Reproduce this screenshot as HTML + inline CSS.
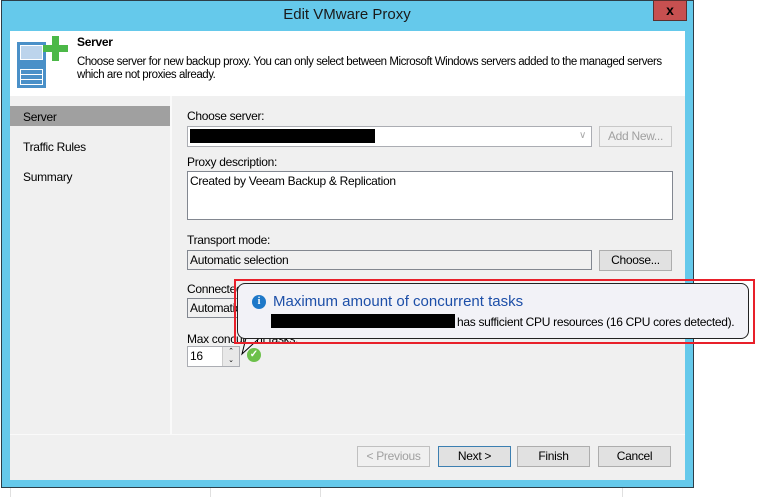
<!DOCTYPE html>
<html><head><meta charset="utf-8"><style>
*{margin:0;padding:0;box-sizing:border-box}
body{width:758px;height:497px;background:#fff;position:relative;overflow:hidden;font-family:"Liberation Sans",sans-serif;font-size:12px;color:#000}
.a{position:absolute}
.t{position:absolute;white-space:nowrap;font-size:12px;letter-spacing:-0.3px}
.btn{position:absolute;background:#e1e1e1;border:1px solid #adadad;text-align:center;font-size:12px;line-height:18px;letter-spacing:-0.3px}
</style></head><body>
<div class="a" style="left:10px;top:488px;width:1px;height:9px;background:#e0e0e0"></div>
<div class="a" style="left:210px;top:488px;width:1px;height:9px;background:#e0e0e0"></div>
<div class="a" style="left:320px;top:488px;width:1px;height:9px;background:#e0e0e0"></div>
<div class="a" style="left:622px;top:488px;width:1px;height:9px;background:#e0e0e0"></div>
<div class="a" style="left:1px;top:0;width:693px;height:488px;background:#65c9eb;border:1px solid #2d3e48"></div>
<div class="t" style="left:0;width:694px;top:6px;text-align:center;font-size:15px;color:#1a1a1a;letter-spacing:0">Edit VMware Proxy</div>
<div class="a" style="left:653px;top:0;width:34px;height:21px;background:#c75050;border:1px solid #5a3030;color:#000;font-weight:bold;font-size:14px;text-align:center;line-height:18px">x</div>
<div class="a" style="left:10px;top:31px;width:675px;height:449px;background:#f0f0f0"></div>
<div class="a" style="left:10px;top:31px;width:675px;height:65px;background:#fff"></div>
<div class="a" style="left:17px;top:42px;width:29px;height:46px;background:#4a90c8"></div>
<div class="a" style="left:20px;top:45px;width:23px;height:15px;background:#bcd4ec;border:1px solid #fff"></div>
<div class="a" style="left:20px;top:69px;width:23px;height:16px;border:1px solid #fff"></div>
<div class="a" style="left:20px;top:74px;width:23px;height:1px;background:#fff"></div>
<div class="a" style="left:20px;top:79px;width:23px;height:1px;background:#fff"></div>
<div class="a" style="left:52px;top:36px;width:7px;height:25px;background:#4cb848"></div>
<div class="a" style="left:43px;top:45px;width:25px;height:7px;background:#4cb848"></div>
<div class="t" style="left:77px;top:35px;font-weight:bold;font-size:12px">Server</div>
<div class="t" style="left:77px;top:56px;font-size:11.5px;letter-spacing:-0.45px">Choose server for new backup proxy. You can only select between Microsoft Windows servers added to the managed servers</div>
<div class="t" style="left:77px;top:69px;font-size:11.5px;letter-spacing:-0.45px">which are not proxies already.</div>
<div class="a" style="left:10px;top:106px;width:160px;height:20px;background:#a0a0a0"></div>
<div class="t" style="left:23px;top:110px">Server</div>
<div class="t" style="left:23px;top:140px">Traffic Rules</div>
<div class="t" style="left:23px;top:170px">Summary</div>
<div class="a" style="left:170px;top:96px;width:2px;height:338px;background:#fafafa"></div>
<div class="a" style="left:10px;top:434px;width:675px;height:1px;background:#fafafa"></div>
<div class="t" style="left:187px;top:109px">Choose server:</div>
<div class="a" style="left:187px;top:126px;width:405px;height:21px;background:#fff;border:1px solid #abadb3"></div>
<div class="a" style="left:190px;top:129px;width:185px;height:14px;background:#000"></div>
<div class="t" style="left:579px;top:130px;color:#aaa;font-size:10px">&#8744;</div>
<div class="btn" style="left:599px;top:126px;width:73px;height:21px;background:#f0f0f0;border-color:#c8c8c8;color:#a0a0a0">Add New...</div>
<div class="t" style="left:187px;top:155px">Proxy description:</div>
<div class="a" style="left:187px;top:171px;width:486px;height:49px;background:#fff;border:1px solid #828790"></div>
<div class="t" style="left:190px;top:174px">Created by Veeam Backup &amp; Replication</div>
<div class="t" style="left:187px;top:233px">Transport mode:</div>
<div class="a" style="left:187px;top:250px;width:405px;height:20px;background:#f0f0f0;border:1px solid #828790"></div>
<div class="t" style="left:190px;top:253px">Automatic selection</div>
<div class="btn" style="left:599px;top:250px;width:73px;height:21px">Choose...</div>
<div class="t" style="left:187px;top:282px">Connected</div>
<div class="a" style="left:187px;top:298px;width:60px;height:20px;background:#f0f0f0;border:1px solid #828790"></div>
<div class="t" style="left:190px;top:301px">Automatic</div>
<div class="t" style="left:187px;top:332px">Max concurrent tasks:</div>
<div class="a" style="left:187px;top:346px;width:53px;height:21px;background:#fff;border:1px solid #abadb3"></div>
<div class="t" style="left:190px;top:349px">16</div>
<div class="a" style="left:222px;top:347px;width:17px;height:19px;background:#e8e8e8;border-left:1px solid #ccc;font-size:7px;text-align:center;line-height:9px">&#8963;<br>&#8964;</div>
<div class="a" style="left:247px;top:348px;width:14px;height:14px;border-radius:50%;background:#6cc04a;color:#fff;font-size:10px;line-height:14px;text-align:center;font-weight:bold">&#10003;</div>
<svg class="a" style="left:240px;top:330px" width="30" height="30"><path d="M8 0 L2 24 L26 2" fill="#f2f2f7" stroke="#000" stroke-width="1"/></svg>
<div class="a" style="left:237px;top:283px;width:512px;height:56px;background:#f2f2f7;border:1px solid #222;border-radius:8px"></div>
<div class="a" style="left:234px;top:279px;width:521px;height:65px;border:2px solid #e8202a"></div>
<div class="a" style="left:252px;top:295px;width:14px;height:14px;border-radius:50%;background:#1e78c8;color:#fff;font-size:10px;font-weight:bold;line-height:14px;text-align:center;font-family:'Liberation Serif',serif">i</div>
<div class="t" style="left:273px;top:293px;font-size:15px;color:#1d4fa8;letter-spacing:0">Maximum amount of concurrent tasks</div>
<div class="a" style="left:271px;top:314px;width:184px;height:14px;background:#000"></div>
<div class="t" style="left:457px;top:315px">has sufficient CPU resources (16 CPU cores detected).</div>
<div class="btn" style="left:357px;top:446px;width:73px;height:21px;background:#f0f0f0;border-color:#c0c0c0;color:#a0a0a0">&lt; Previous</div>
<div class="btn" style="left:438px;top:446px;width:73px;height:21px;border-color:#3c7fb1">Next &gt;</div>
<div class="btn" style="left:517px;top:446px;width:73px;height:21px">Finish</div>
<div class="btn" style="left:598px;top:446px;width:73px;height:21px">Cancel</div>
</body></html>
